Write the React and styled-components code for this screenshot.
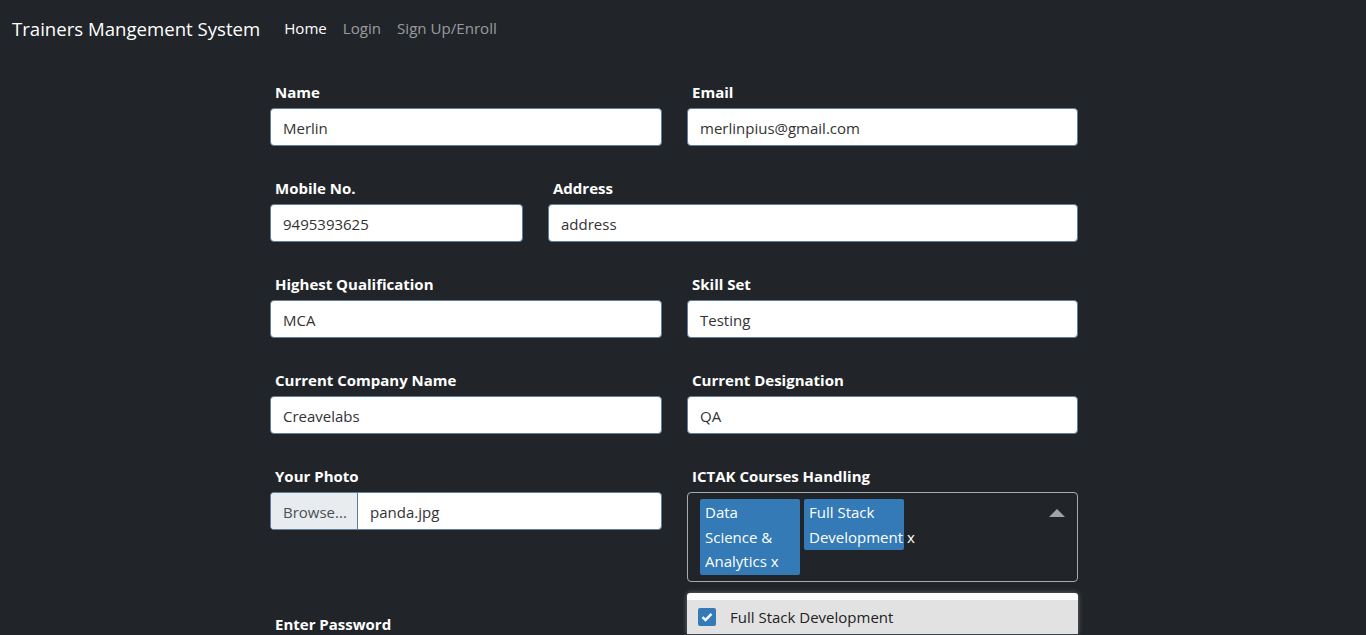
import styled, { createGlobalStyle } from "styled-components";

const GlobalStyle = createGlobalStyle`
  * { box-sizing: border-box; }
  body {
    margin: 0;
    background-color: #212529;
    font-family: "Open Sans", "Noto Sans", sans-serif;
    overflow: hidden;
  }
`;

function App() {
  return (
    <>
      <GlobalStyle />
      <Navbar>
        <Brand>Trainers Mangement System</Brand>
        <NavLink active>Home</NavLink>
        <NavLink>Login</NavLink>
        <NavLink>Sign Up/Enroll</NavLink>
      </Navbar>
      <Form onSubmit={(e) => e.preventDefault()}>
        <Row cols="392px 391px">
          <Group>
            <Label>Name</Label>
            <Input defaultValue="Merlin" />
          </Group>
          <Group>
            <Label>Email</Label>
            <Input defaultValue="merlinpius@gmail.com" />
          </Group>
        </Row>
        <Row cols="253px 530px">
          <Group>
            <Label>Mobile No.</Label>
            <Input defaultValue="9495393625" />
          </Group>
          <Group>
            <Label>Address</Label>
            <Input defaultValue="address" />
          </Group>
        </Row>
        <Row cols="392px 391px">
          <Group>
            <Label>Highest Qualification</Label>
            <Input defaultValue="MCA" />
          </Group>
          <Group>
            <Label>Skill Set</Label>
            <Input defaultValue="Testing" />
          </Group>
        </Row>
        <Row cols="392px 391px">
          <Group>
            <Label>Current Company Name</Label>
            <Input defaultValue="Creavelabs" />
          </Group>
          <Group>
            <Label>Current Designation</Label>
            <Input defaultValue="QA" />
          </Group>
        </Row>
        <Row cols="392px 391px">
          <Group>
            <Label>Your Photo</Label>
            <FileBox>
              <FileButton>Browse...</FileButton>
              <FileName>panda.jpg</FileName>
            </FileBox>
          </Group>
          <Group>
            <Label>ICTAK Courses Handling</Label>
            <SelectWrap>
              <MultiBox>
                <Chip>Data Science &amp; Analytics&nbsp;x</Chip>{" "}
                <Chip>Full Stack Development&nbsp;x</Chip>
                <Caret />
              </MultiBox>
              <Dropdown>
                <Option selected>
                  <Check>
                    <svg width="12" height="10" viewBox="0 0 12 10">
                      <path d="M1.5 5.2 L4.5 8 L10.5 1.8" fill="none" stroke="#fff" strokeWidth="2.4" />
                    </svg>
                  </Check>
                  Full Stack Development
                </Option>
              </Dropdown>
            </SelectWrap>
          </Group>
        </Row>
        <Row cols="392px 391px">
          <Group>
            <Label>Enter Password</Label>
          </Group>
        </Row>
      </Form>
    </>
  );
}

const Navbar = styled.nav`
  height: 59px;
  display: flex;
  align-items: center;
  padding: 0 0 3px 12px;
`;

const Brand = styled.div`
  color: #fff;
  font-size: 18.6px;
  margin-right: 16px;
`;

const NavLink = styled.a`
  color: ${(props) => (props.active ? "#fff" : "rgba(255,255,255,0.55)")};
  font-size: 15.1px;
  padding: 0 8px;
  cursor: pointer;
`;

const Form = styled.form`
  margin-left: 270px;
  padding-top: 22px;
  display: flex;
  flex-direction: column;
  gap: 31px;
`;

const Row = styled.div`
  display: grid;
  grid-template-columns: ${(props) => props.cols};
  column-gap: 25px;
  align-items: start;
`;

const Group = styled.div`
  display: flex;
  flex-direction: column;
`;

const Label = styled.label`
  color: #fff;
  font-weight: 700;
  font-size: 15px;
  line-height: 22px;
  margin: 0 0 5px 5px;
`;

const Input = styled.input`
  height: 38px;
  border: 1px solid #5d7e9c;
  border-radius: 4px;
  padding: 1px 12px 0;
  font-family: inherit;
  font-size: 15px;
  color: #333;
  background: #fff;
  outline: none;
`;

const FileBox = styled.div`
  height: 38px;
  display: flex;
  border: 1px solid #5d7e9c;
  border-radius: 4px;
  background: #fff;
  overflow: hidden;
`;

const FileButton = styled.div`
  width: 87px;
  display: flex;
  align-items: center;
  padding: 1px 0 0 12px;
  background: #e9ecef;
  border-right: 1px solid #5d7e9c;
  color: #495057;
  font-size: 15px;
`;

const FileName = styled.div`
  display: flex;
  align-items: center;
  padding: 1px 0 0 12px;
  color: #333;
  font-size: 15px;
`;

const SelectWrap = styled.div`
  position: relative;
`;

const MultiBox = styled.div`
  position: relative;
  height: 90px;
  border: 1px solid #a8abae;
  border-radius: 4px;
  padding: 6px 12px;
  font-size: 0;
`;

const Chip = styled.span`
  display: inline-block;
  vertical-align: top;
  width: 100px;
  background: #337ab7;
  color: #fff;
  font-size: 15px;
  line-height: 24.5px;
  padding: 1px 12px 1px 5px;
  margin-right: 4px;
  border-radius: 2px;
`;

const Caret = styled.span`
  position: absolute;
  right: 12px;
  top: 16px;
  width: 0;
  height: 0;
  border-left: 8px solid transparent;
  border-right: 8px solid transparent;
  border-bottom: 8px solid #a3a3a3;
`;

const Dropdown = styled.div`
  position: absolute;
  left: 0;
  right: 0;
  top: calc(100% + 11px);
  background: #fff;
  padding-top: 7px;
  border-radius: 3px 3px 0 0;
  box-shadow: 0 0 5px rgba(255, 255, 255, 0.35);
`;

const Option = styled.div`
  height: 34px;
  display: flex;
  align-items: center;
  padding-left: 11px;
  gap: 14px;
  background: ${(props) => (props.selected ? "#e2e2e2" : "#fff")};
  color: #222;
  font-size: 15px;
`;

const Check = styled.span`
  width: 18px;
  height: 18px;
  background: #337ab7;
  display: flex;
  align-items: center;
  justify-content: center;
  border-radius: 2px;
`;

export default App;
